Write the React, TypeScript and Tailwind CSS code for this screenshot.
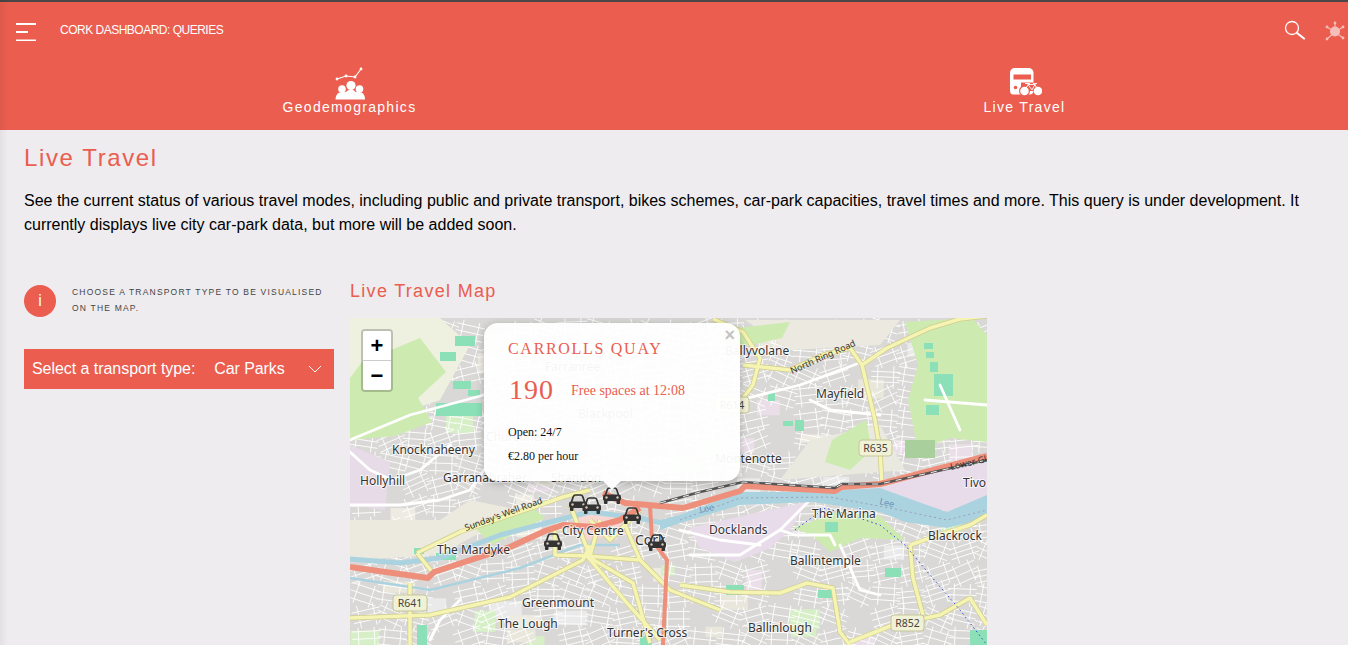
import React from 'react';

type Pt = [number, number];
const d = (pts: Pt[]) => 'M' + pts.map((p) => p.join(' ')).join('L');

// cheap seeded random, so the street pattern stays the same on every load
function rng(seed: number) {
  let s = seed;
  return () => {
    s = (s * 16807) % 2147483647;
    return s / 2147483647;
  };
}

const parks = [
  'M362 362L420 338L446 372L418 398L432 422L395 436L350 440L350 378Z',
  'M905 322L972 318L987 335L987 442L950 438L918 450L908 400L918 365Z',
  'M832 440L866 420L872 450L850 470L825 462Z',
  'M720 330L790 322L782 338L738 348Z',
  'M472 525L530 505L545 518L492 545Z',
  'M793 528L838 512L880 516L905 540L860 538L830 552L812 535Z',
];

const pitches: number[][] = [
  [440, 352, 16, 9], [455, 336, 20, 10], [436, 403, 46, 13], [453, 381, 18, 8], [468, 390, 12, 6],
  [768, 392, 7, 9], [795, 420, 9, 11], [783, 421, 10, 5], [924, 343, 9, 6], [926, 352, 8, 6],
  [930, 362, 8, 10], [934, 374, 19, 22], [926, 405, 13, 10], [825, 522, 13, 10], [726, 585, 18, 10],
  [417, 625, 10, 20], [885, 568, 16, 9], [818, 590, 16, 8], [640, 636, 12, 9], [436, 553, 20, 7],
  [414, 548, 10, 6], [970, 630, 17, 15],
];

const yellowRoads: Pt[][] = [
  [[743, 365], [790, 370], [823, 355], [850, 348], [862, 365], [887, 348], [930, 328], [960, 319], [987, 316]],
  [[862, 365], [875, 420], [880, 450], [882, 485]],
  [[713, 319], [743, 332], [760, 358], [753, 385], [743, 398]],
  [[680, 585], [730, 592], [780, 593], [807, 583], [833, 588], [840, 632], [850, 645]],
  [[850, 642], [893, 625], [940, 615], [970, 598], [987, 625]],
  [[910, 545], [913, 578], [923, 615]],
  [[910, 545], [933, 537], [970, 525], [987, 515]],
  [[417, 553], [460, 532], [540, 505], [563, 497], [590, 490]],
  [[417, 553], [433, 573]],
  [[410, 583], [410, 613], [410, 645]],
  [[350, 618], [430, 615], [510, 597], [583, 560], [590, 545]],
  [[587, 556], [633, 583], [650, 643]],
  [[587, 556], [627, 603], [660, 640]],
  [[587, 556], [640, 560], [670, 590], [720, 610]],
  [[570, 505], [590, 556], [600, 520]],
  [[640, 510], [610, 540], [590, 520]],
  [[555, 525], [555, 555], [590, 556]],
  [[625, 525], [640, 560]],
];

const whiteRoads: Pt[][] = [
  [[350, 505], [400, 505], [440, 500], [470, 490], [484, 470]],
  [[350, 440], [410, 415], [484, 395]],
  [[350, 452], [370, 470], [392, 480], [420, 470], [450, 445]],
  [[740, 400], [800, 385], [862, 362]],
  [[810, 400], [830, 410], [880, 415]],
  [[925, 400], [987, 405]],
  [[940, 385], [960, 430]],
  [[690, 555], [740, 555], [780, 530], [810, 500]],
  [[780, 530], [795, 535], [830, 535], [835, 545]],
  [[680, 530], [720, 540], [760, 545]],
  [[840, 545], [860, 590], [880, 595]],
  [[460, 600], [440, 620], [430, 640]],
];

// dense white mesh of small streets, one little rotated grid per cell
function Streets() {
  const r = rng(4711);
  const lines: React.ReactElement[] = [];
  for (let cx = 350; cx < 990; cx += 26) {
    for (let cy = 318; cy < 648; cy += 22) {
      if (r() < 0.12) continue;
      const a = r() * 0.9 - 0.45;
      const ca = Math.cos(a);
      const sa = Math.sin(a);
      const mx = cx + 13 + r() * 4;
      const my = cy + 11 + r() * 4;
      const gap = 5 + r() * 3;
      for (let i = -1; i <= 1; i++) {
        lines.push(
          <line key={`${cx}-${cy}-a${i}`} x1={mx - 14 * ca - i * gap * sa} y1={my - 14 * sa + i * gap * ca} x2={mx + 14 * ca - i * gap * sa} y2={my + 14 * sa + i * gap * ca} />,
        );
      }
      for (let i = -1; i <= 1; i += 2) {
        lines.push(
          <line key={`${cx}-${cy}-b${i}`} x1={mx + i * 8 * ca + 11 * sa} y1={my + i * 8 * sa - 11 * ca} x2={mx + i * 8 * ca - 11 * sa} y2={my + i * 8 * sa + 11 * ca} />,
        );
      }
    }
  }
  return (
    <g stroke="#ffffff" strokeWidth={0.9} strokeLinecap="round">
      {lines}
    </g>
  );
}

// pale gaps in the built-up land
function Patches() {
  const r = rng(91);
  const colors = ['#eeebe3', '#e9e7dc', '#d6efc6', '#eaeaea', '#eadfe8'];
  const out: React.ReactElement[] = [];
  for (let i = 0; i < 60; i++) {
    out.push(
      <rect key={i} x={350 + r() * 630} y={330 + r() * 310} width={12 + r() * 22} height={8 + r() * 14} fill={colors[Math.floor(r() * colors.length)]} />,
    );
  }
  return <g>{out}</g>;
}

function Car({ x, y }: { x: number; y: number }) {
  return (
    <g transform={`translate(${x - 10} ${y - 9})`}>
      <path d="M3.500 8L5.200 2.800Q5.800 1 7.500 1H12.500Q14.200 1 14.800 2.800L16.500 8" fill="none" stroke="#333333" strokeWidth={1.700} />
      <rect x={1} y={7.500} width={18} height={6.500} rx={2} fill="#333333" />
      <rect x={2} y={13} width={3.500} height={4} rx={0.800} fill="#333333" />
      <rect x={14.500} y={13} width={3.500} height={4} rx={0.800} fill="#333333" />
      <circle cx={4.500} cy={10.500} r={1.200} fill="#d9c9b9" />
      <circle cx={15.500} cy={10.500} r={1.200} fill="#d9c9b9" />
    </g>
  );
}

function Label({ x, y, size = 12, children }: { x: number; y: number; size?: number; children: string }) {
  return (
    <text x={x} y={y} fontSize={size} fill="#333333" stroke="#ffffff" strokeWidth={2} strokeOpacity={0.7} paintOrder="stroke" fontFamily="'Noto Sans', sans-serif">
      {children}
    </text>
  );
}

function Shield({ x, y, w, label }: { x: number; y: number; w: number; label: string }) {
  return (
    <g>
      <rect x={x} y={y} width={w} height={16} rx={3} fill="#f1f1d6" stroke="#c5c59a" />
      <text x={x + w / 2} y={y + 12} fontSize={10.500} textAnchor="middle" fill="#444" fontFamily="'Noto Sans', sans-serif">
        {label}
      </text>
    </g>
  );
}

function RoadLabel({ x, y, angle, color = '#333333', children }: { x: number; y: number; angle: number; color?: string; children: string }) {
  return (
    <text transform={`translate(${x} ${y}) rotate(${angle})`} fontSize={9} fill={color} fontFamily="'Noto Sans', sans-serif">
      {children}
    </text>
  );
}

function MapDrawing() {
  const rail: Pt[] = [[660, 503], [700, 492], [743, 482], [835, 488], [842, 484], [880, 484], [987, 460]];
  return (
    <svg viewBox="350 318 637 327" className="block w-full h-full">
      <rect x="350" y="318" width="637" height="327" fill="#d9d8d6" />
      <Patches />
      <Streets />
      {/* pale open land */}
      <path d="M350 318H440L470 345L440 400L350 430Z" fill="#eef0e0" />
      <path d="M350 520H440L470 500L520 510L440 555L350 560Z" fill="#ece9df" />
      <path d="M745 320H900L880 345L790 350Z" fill="#ebe9e0" />
      <path d="M810 440L880 425L905 470L780 480Z" fill="#e9e9df" />
      <path d="M350 445L390 462L385 510L350 505Z" fill="#e6dbe6" />
      {parks.map((p, i) => (
        <path key={i} d={p} fill="#cdebb0" />
      ))}
      <rect x="905" y="440" width="30" height="18" fill="#a9cf9c" />
      <path d="M575 517L620 512L625 535L585 540Z" fill="#f6d5d3" />
      {/* industrial land along the river */}
      <path d="M690 528L760 512L807 502L790 530L770 548L735 562L700 548Z" fill="#e9dcea" />
      <path d="M855 488L987 462V497L950 512L905 502Z" fill="#e9dcea" />
      {pitches.map((p, i) => (
        <rect key={i} x={p[0]} y={p[1]} width={p[2]} height={p[3]} fill="#8ce0b8" />
      ))}
      {whiteRoads.map((r, i) => (
        <path key={i} d={d(r)} fill="none" stroke="#ffffff" strokeWidth={2.800} strokeLinejoin="round" strokeLinecap="round" />
      ))}
      {/* river lee */}
      <path d="M660 520L680 515L740 492L813 492L880 488L913 500L947 512L987 495V518L947 528L905 522L880 512L813 502L740 505L680 523L660 530Z" fill="#aad3df" />
      <path d={d([[350, 559], [400, 563], [440, 558], [500, 535], [550, 522], [590, 512], [640, 518], [665, 524]])} fill="none" stroke="#aad3df" strokeWidth={5} strokeLinejoin="round" />
      <path d={d([[350, 578], [430, 590], [520, 568], [580, 545], [620, 545]])} fill="none" stroke="#aad3df" strokeWidth={2.500} />
      {/* yellow roads */}
      {yellowRoads.map((r, i) => (
        <path key={i} d={d(r)} fill="none" stroke="#cfcd8e" strokeWidth={5} strokeLinejoin="round" />
      ))}
      {yellowRoads.map((r, i) => (
        <path key={i} d={d(r)} fill="none" stroke="#f6f4b2" strokeWidth={3.500} strokeLinejoin="round" />
      ))}
      {/* trunk roads */}
      {[
        [[350, 567], [428, 578], [434, 572], [510, 547], [545, 531], [563, 525], [595, 527], [620, 520], [640, 508]] as Pt[],
        [[603, 493], [625, 503], [683, 508], [740, 491], [745, 486], [835, 491], [842, 487], [880, 484], [987, 456]] as Pt[],
      ].map((r, i) => (
        <path key={i} d={d(r)} fill="none" stroke="#ee8f7b" strokeWidth={6} strokeLinejoin="round" />
      ))}
      <path d={d([[650, 505], [652, 540], [667, 560], [663, 645]])} fill="none" stroke="#ee8f7b" strokeWidth={4} strokeLinejoin="round" />
      <path d={d(rail)} fill="none" stroke="#555555" strokeWidth={2.400} />
      <path d={d(rail)} fill="none" stroke="#ffffff" strokeWidth={0.900} strokeDasharray="6 6" />
      {/* dotted routes */}
      <path d="M795 530L825 508L850 515L880 525L905 545L930 575L960 610L987 645" fill="none" stroke="#2f4bdc" strokeWidth={1} strokeDasharray="1.500 3" />
      <path d="M680 520L740 498L830 497L900 510L947 520L987 510" fill="none" stroke="#9a8fb0" strokeWidth={0.800} strokeDasharray="2 3" />

      <RoadLabel x={466} y={531} angle={-20}>Sunday's Well Road</RoadLabel>
      <RoadLabel x={792} y={374} angle={-24}>North Ring Road</RoadLabel>
      <RoadLabel x={951} y={470} angle={-13}>Lower Gla</RoadLabel>
      <RoadLabel x={700} y={513} angle={-12} color="#6a8fb5">Lee</RoadLabel>
      <RoadLabel x={879} y={504} angle={14} color="#6a8fb5">Lee</RoadLabel>

      <Shield x={393} y={595} w={34} label="R641" />
      <Shield x={859} y={440} w={33} label="R635" />
      <Shield x={891} y={615} w={33} label="R852" />
      <Shield x={715} y={397} w={34} label="R614" />

      <Label x={392} y={454}>Knocknaheeny</Label>
      <Label x={360} y={485}>Hollyhill</Label>
      <Label x={443} y={482}>Garranabraher</Label>
      <Label x={551} y={482}>Shandon</Label>
      <Label x={545} y={371}>Farranree</Label>
      <Label x={578} y={418}>Blackpool</Label>
      <Label x={486} y={441}>Churchfield</Label>
      <Label x={725} y={355}>Ballyvolane</Label>
      <Label x={816} y={398}>Mayfield</Label>
      <Label x={715} y={463}>Montenotte</Label>
      <Label x={963} y={487}>Tivo</Label>
      <Label x={812} y={518}>The Marina</Label>
      <Label x={709} y={534}>Docklands</Label>
      <Label x={928} y={540}>Blackrock</Label>
      <Label x={790} y={565}>Ballintemple</Label>
      <Label x={748} y={632}>Ballinlough</Label>
      <Label x={562} y={535}>City Centre</Label>
      <Label x={635} y={545} size={14}>Cork</Label>
      <Label x={437} y={554}>The Mardyke</Label>
      <Label x={522} y={607}>Greenmount</Label>
      <Label x={498} y={628}>The Lough</Label>
      <Label x={607} y={637}>Turner's Cross</Label>

      <Car x={578} y={503} />
      <Car x={592} y={506} />
      <Car x={612} y={496} />
      <Car x={632} y={516} />
      <Car x={553} y={542} />
      <Car x={657} y={543} />
    </svg>
  );
}

function MapPopup() {
  return (
    <div className="absolute left-[134px] top-[5px] w-[256px] h-[158px] bg-white/95 rounded-[14px] shadow-[0_2px_8px_rgba(0,0,0,0.25)] font-['Liberation_Serif',serif] text-[#ea5d4f]">
      <span className="absolute right-[5px] top-[3px] text-[18px] leading-[18px] font-bold text-[#c3c3c3] font-['Liberation_Sans',sans-serif]">×</span>
      <div className="pl-6 pt-[16px]">
        <div className="text-[16px] leading-5 tracking-[1.700px]">CARROLLS QUAY</div>
        <div className="flex items-center mt-[13px] h-[36px]">
          <span className="text-[28px] tracking-[1px] w-[63px] pl-[1px]">190</span>
          <span className="text-[14px]">Free spaces at 12:08</span>
        </div>
        <div className="mt-[12px] text-[12px] leading-6 text-[#111]">
          <div>Open: 24/7</div>
          <div>€2.80 per hour</div>
        </div>
      </div>
      <div className="absolute left-[118px] top-[158px] w-[20px] h-[10px] overflow-hidden">
        <div className="w-[14px] h-[14px] mx-auto bg-white/95 rotate-45 mt-[-8px]" />
      </div>
    </div>
  );
}

function ZoomControl() {
  return (
    <div className="absolute left-[11px] top-[11px] w-[32px] border-2 border-black/20 rounded-[4px] bg-clip-padding">
      <div className="h-[30px] bg-white rounded-t-[2px] border-b border-[#cccccc] flex items-center justify-center text-[22px] font-bold text-black font-['Liberation_Sans',sans-serif] leading-none">+</div>
      <div className="h-[29px] bg-white rounded-b-[2px] flex items-center justify-center text-[22px] font-bold text-black font-['Liberation_Sans',sans-serif] leading-none">−</div>
    </div>
  );
}

function GeoIcon() {
  return (
    <svg width="32" height="34" viewBox="335 67 32 34" fill="#ffffff">
      <path d="M338 79L347 76L356 77L362 69" fill="none" stroke="#ffffff" strokeWidth="1.100" />
      <circle cx="338" cy="79" r="1.400" />
      <circle cx="347" cy="76" r="1.400" />
      <circle cx="356" cy="77" r="1.400" />
      <circle cx="362" cy="69" r="1.400" />
      <circle cx="343" cy="89" r="3.800" />
      <circle cx="352" cy="85.500" r="4.600" />
      <circle cx="360.500" cy="89" r="3.800" />
      <path d="M336.500 99.500C336.500 95 339 92 343 92L360 92C364 92 366 95 366 99.500Z" />
      <path d="M345 99C345 93 348 89.500 352 89.500C356 89.500 358 93 358 99Z" />
    </svg>
  );
}

function BusBikeIcon() {
  return (
    <svg width="34" height="30" viewBox="1007 69 34 30">
      <path d="M1014 70H1027C1030.500 70 1032.500 72 1032.500 75V92C1032.500 95 1031 96.500 1029 96.500H1012C1010 96.500 1009 95 1009 92V75C1009 72 1011 70 1014 70Z" fill="#ffffff" />
      <rect x="1012.500" y="76.500" width="17.500" height="5" fill="#ea5d4f" />
      <circle cx="1014.500" cy="89.500" r="1.800" fill="#ea5d4f" />
      <path d="M1020 84.500H1038V93H1020Z" fill="#ea5d4f" />
      <circle cx="1023.500" cy="93" r="5.500" fill="#ea5d4f" />
      <circle cx="1023.500" cy="93" r="4.300" fill="#ffffff" />
      <circle cx="1037" cy="93" r="4.300" fill="#ffffff" />
      <path d="M1023.500 93L1027 86.500H1034L1037 93M1027 86.500L1031 92L1034 86.500M1024 85.500H1029M1032 85.500H1036" fill="none" stroke="#ffffff" strokeWidth="0.900" />
    </svg>
  );
}

export default function App() {
  return (
    <div className="relative h-screen overflow-hidden bg-[#eeecee] font-['Liberation_Sans',Arial,sans-serif] text-black">
      {/* Header */}
      <header className="h-[130px] bg-[#ea5d4f] border-t-2 border-[#4a4646] text-white">
        <div className="h-[56px] flex items-center relative">
          <svg width="20" height="18" viewBox="0 0 20 18" className="ml-4 mt-[3px]" stroke="#ffffff" strokeWidth="1.800">
            <path d="M0 1H20M0 9H12M0 17.500H20" />
          </svg>
          <span className="ml-6 text-[12px] tracking-[-0.5px]">CORK DASHBOARD: QUERIES</span>
          <div className="ml-auto flex items-center mr-[2px]">
            <svg width="22" height="22" viewBox="0 0 22 22" fill="none" stroke="#ffffff">
              <circle cx="8" cy="9" r="6.500" strokeWidth="1.300" />
              <path d="M13 14L20 19.500" strokeWidth="2.200" strokeLinecap="round" />
            </svg>
            <svg width="22" height="22" viewBox="0 0 22 22" className="ml-[18px] mt-[3px] opacity-60" fill="#ffffff" stroke="#ffffff">
              <circle cx="11" cy="10.500" r="5" stroke="none" />
              <path d="M11 11L11 2M11 11L3 6M11 11L19 6M11 11L3 18M11 11L19 17" strokeWidth="1.100" />
              <circle cx="11" cy="2" r="1.400" stroke="none" />
              <circle cx="3" cy="6" r="1.400" stroke="none" />
              <circle cx="19" cy="6" r="1.400" stroke="none" />
              <circle cx="3" cy="18" r="1.400" stroke="none" />
              <circle cx="19" cy="17" r="1.400" stroke="none" />
            </svg>
          </div>
        </div>
        <nav className="flex pl-3 pt-[9px]">
          <div className="w-[675px] flex-none flex flex-col items-center">
            <GeoIcon />
            <span className="text-[14px] leading-4 tracking-[1.300px] mt-[-2px]">Geodemographics</span>
          </div>
          <div className="w-[675px] flex-none flex flex-col items-center">
            <BusBikeIcon />
            <span className="text-[14px] leading-4 tracking-[1.300px] mt-[2px]">Live Travel</span>
          </div>
        </nav>
      </header>

      {/* Main Content */}
      <main className="px-6">
        <h1 className="text-[24px] leading-7 tracking-[1.600px] text-[#ea5d4f] mt-[14px]">Live Travel</h1>
        <p className="mt-[17px] text-[16px] leading-6">
          See the current status of various travel modes, including public and private transport, bikes schemes, car-park capacities, travel times and more. This query is under development. It currently displays live city car-park data, but more will be added soon.
        </p>

        <div className="flex mt-[39px] gap-4">
          {/* Sidebar */}
          <aside className="w-[310px] flex-shrink-0 pt-[9px]">
            <div className="flex gap-4">
              <div className="w-8 h-8 rounded-full bg-[#ea5d4f] text-white text-[16px] flex items-center justify-center flex-shrink-0">i</div>
              <p className="text-[8.500px] leading-4 uppercase tracking-[1.200px] text-[#444] mt-[-1px]">Choose a transport type to be visualised on the map.</p>
            </div>
            <div className="mt-8 h-10 bg-[#ea5d4f] text-white text-[16px] flex items-center pl-2 pr-3">
              <span className="tracking-[-0.05px]">Select a transport type:</span>
              <span className="ml-[19px] tracking-[-0.1px]">Car Parks</span>
              <svg width="14" height="8" viewBox="0 0 14 8" className="ml-auto" fill="none" stroke="#ffffff">
                <path d="M1 1L7 7L13 1" />
              </svg>
            </div>
          </aside>

          {/* Map */}
          <section className="flex-1">
            <h2 className="text-[18px] leading-6 tracking-[1.300px] text-[#ea5d4f] mt-[3px]">Live Travel Map</h2>
            <div className="relative w-[637px] h-[327px] mt-[15px] overflow-hidden">
              <MapDrawing />
              <ZoomControl />
              <MapPopup />
            </div>
          </section>
        </div>
      </main>

      {/* shadow of the closed drawer */}
      <div className="absolute left-0 top-0 bottom-0 w-2 bg-gradient-to-r from-black/5 to-transparent pointer-events-none" />
    </div>
  );
}
